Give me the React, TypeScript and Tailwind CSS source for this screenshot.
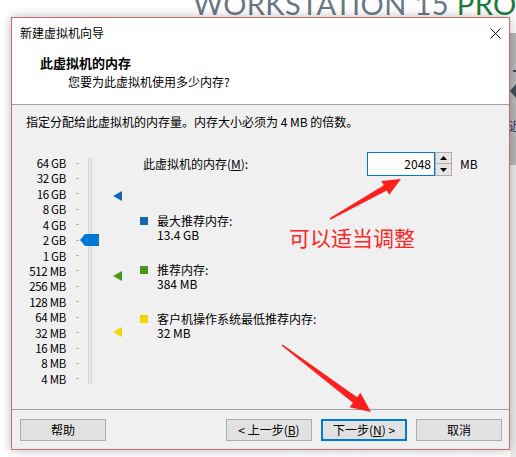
import React from "react";

const labels = [
  "64 GB",
  "32 GB",
  "16 GB",
  "8 GB",
  "4 GB",
  "2 GB",
  "1 GB",
  "512 MB",
  "256 MB",
  "128 MB",
  "64 MB",
  "32 MB",
  "16 MB",
  "8 MB",
  "4 MB",
];

function arrowPoints(
  tx: number,
  ty: number,
  px: number,
  py: number,
  w0: number,
  w1: number,
  w2: number,
  L: number
): string {
  const dx = px - tx;
  const dy = py - ty;
  const len = Math.hypot(dx, dy);
  const ux = dx / len;
  const uy = dy / len;
  const nx = -uy;
  const ny = ux;
  const bx = px - ux * L;
  const by = py - uy * L;
  const pts: [number, number][] = [
    [tx + nx * w0, ty + ny * w0],
    [bx + nx * w1, by + ny * w1],
    [bx + nx * w2, by + ny * w2],
    [px, py],
    [bx - nx * w2, by - ny * w2],
    [bx - nx * w1, by - ny * w1],
    [tx - nx * w0, ty - ny * w0],
  ];
  return pts.map((p) => `${p[0].toFixed(1)},${p[1].toFixed(1)}`).join(" ");
}

function Button({
  children,
  primary,
}: {
  children: React.ReactNode;
  primary?: boolean;
}) {
  return (
    <div
      className={
        primary
          ? "w-[86px] h-[22px] border-2 border-[#0078d7] bg-[#e1e1e1] flex items-center justify-center text-[12px] leading-[14px] text-black"
          : "w-[86px] h-[22px] border border-[#adadad] bg-[#e1e1e1] flex items-center justify-center text-[12px] leading-[14px] text-black"
      }
    >
      {children}
    </div>
  );
}

function LegendItem({
  color,
  title,
  value,
}: {
  color: string;
  title: string;
  value: string;
}) {
  return (
    <div className="flex items-start">
      <div className={`w-[8px] h-[8px] mt-[5px] ${color}`} />
      <div className="ml-[9px] flex flex-col text-[12px] text-black">
        <span className="h-[15px] leading-[17px]">{title}</span>
        <span className="h-[15px] leading-[15px]">{value}</span>
      </div>
    </div>
  );
}

export default function App() {
  return (
    <div className="relative w-[516px] h-[457px] overflow-hidden bg-white font-['Noto_Sans_CJK_SC',sans-serif]">
      {/* desktop background: VMware app behind */}
      <div className="absolute left-[193px] top-[-11px] whitespace-nowrap font-['Lato',sans-serif] text-[29px] leading-[29px] tracking-[0.4px] text-[#6b7885]">
        WORKSTATION 15 <span className="text-[#1d7a3c]">PRO</span>
        <span className="text-[#1d7a3c] text-[12px] align-top">™</span>
      </div>
      <div className="absolute left-[510px] top-[33px] w-[6px] h-[132px] bg-[#b9b9b9] overflow-hidden">
        <div className="absolute left-[3px] top-[37px] w-[4px] h-[2px] bg-[#3f4b56]" />
        <svg
          className="absolute left-0 top-[51px]"
          width="6"
          height="14"
          viewBox="0 0 6 14"
        >
          <polygon points="0,7 6,0 6,14" fill="#3f4b56" />
        </svg>
        <div className="absolute left-[-1px] top-[86px] text-[12px] leading-[14px] text-[#3a2a6a]">
          近
        </div>
      </div>
      <div className="absolute left-[510px] top-[165px] w-[6px] h-[292px] bg-[#ebebeb]" />

      {/* dialog window */}
      <div className="absolute left-[11px] top-[17px] w-[499px] h-[433px] border border-[#cf6b6b] bg-white flex flex-col shadow-[0_0_10px_rgba(0,0,0,0.28)]">
        {/* title bar */}
        <div className="h-[30px] flex items-center justify-between pl-[8px] shrink-0">
          <span className="text-[12px] leading-[16px] text-black">
            新建虚拟机向导
          </span>
          <div className="w-[28px] h-full flex items-center justify-center">
            <svg width="11" height="11" viewBox="0 0 11 11">
              <path d="M0.5 0.5 L10.5 10.5 M10.5 0.5 L0.5 10.5" stroke="#111" strokeWidth="1" />
            </svg>
          </div>
        </div>
        {/* header */}
        <div className="h-[56px] shrink-0 flex flex-col pt-[7px]">
          <span className="pl-[28px] text-[13px] leading-[16px] font-bold text-black">
            此虚拟机的内存
          </span>
          <span className="pl-[56px] mt-[3px] text-[12px] leading-[16px] text-black">
            您要为此虚拟机使用多少内存?
          </span>
        </div>
        <div className="h-px bg-[#a0a0a0] shrink-0" />
        {/* body */}
        <div className="h-[304px] shrink-0 bg-[#f0f0f0] flex flex-col pt-[9px]">
          <span className="pl-[14px] text-[12px] leading-[16px] text-black">
            指定分配给此虚拟机的内存量。内存大小必须为 4 MB 的倍数。
          </span>
          <div className="mt-[20px] flex">
            {/* slider */}
            <div className="relative w-[128px] h-[240px] shrink-0">
              <div className="mt-[6px] h-[230px] flex flex-col justify-between">
                {labels.map((l) => (
                  <div key={l} className="h-[14px] flex items-center">
                    <span className="w-[54px] text-right text-[11.5px] leading-[14px] tracking-[-0.3px] text-black whitespace-nowrap">
                      {l}
                    </span>
                    <div className="ml-[10px] w-[3px] h-px bg-[#b4b4b4]" />
                  </div>
                ))}
              </div>
              <div className="absolute left-[76px] top-[8px] w-[4px] h-[226px] rounded-[1px] border border-[#d6d6d6] bg-[#e7e7e7]" />
              <svg
                className="absolute left-[68px] top-[84px]"
                width="19"
                height="12"
                viewBox="0 0 19 12"
              >
                <polygon points="0,6 5,0 19,0 19,12 5,12" fill="#0078d7" />
              </svg>
              <svg
                className="absolute left-[101px] top-[41px]"
                width="9"
                height="10"
                viewBox="0 0 9 10"
              >
                <polygon points="0,5 9,0 9,10" fill="#1565b0" />
              </svg>
              <svg
                className="absolute left-[101px] top-[121px]"
                width="9"
                height="10"
                viewBox="0 0 9 10"
              >
                <polygon points="0,5 9,0 9,10" fill="#4a961a" />
              </svg>
              <svg
                className="absolute left-[101px] top-[177px]"
                width="9"
                height="10"
                viewBox="0 0 9 10"
              >
                <polygon points="0,5 9,0 9,10" fill="#f2d600" />
              </svg>
            </div>
            {/* right column */}
            <div className="flex flex-col">
              <div className="mt-[2px] h-[24px] flex items-center">
                <span className="w-[227px] pl-[3px] text-[12px] leading-[16px] text-black">
                  此虚拟机的内存(<span className="underline">M</span>):
                </span>
                <div className="w-[68px] h-full border border-[#0078d7] bg-white flex items-center justify-end pr-[3px] text-[12px] leading-[16px] text-black">
                  2048
                </div>
                <div className="w-[17px] h-full flex flex-col">
                  <div className="h-[12px] border border-[#adadad] bg-[#e5e5e5] flex items-center justify-center">
                    <svg width="7" height="4" viewBox="0 0 7 4">
                      <polygon points="3.5,0 7,4 0,4" fill="#000" />
                    </svg>
                  </div>
                  <div className="h-[12px] border border-t-0 border-[#adadad] bg-[#e5e5e5] flex items-center justify-center">
                    <svg width="7" height="4" viewBox="0 0 7 4">
                      <polygon points="0,0 7,0 3.5,4" fill="#000" />
                    </svg>
                  </div>
                </div>
                <span className="ml-[8px] text-[12px] leading-[16px] text-black">
                  MB
                </span>
              </div>
              <div className="mt-[36px] flex flex-col gap-[19px]">
                <LegendItem
                  color="bg-[#1565b0]"
                  title="最大推荐内存:"
                  value="13.4 GB"
                />
                <LegendItem
                  color="bg-[#4a961a]"
                  title="推荐内存:"
                  value="384 MB"
                />
                <LegendItem
                  color="bg-[#f2d600]"
                  title="客户机操作系统最低推荐内存:"
                  value="32 MB"
                />
              </div>
            </div>
          </div>
        </div>
        <div className="h-px bg-[#a0a0a0] shrink-0" />
        {/* footer */}
        <div className="flex-1 bg-[#f0f0f0] flex items-start pt-[9px] pl-[8px] pr-[7px]">
          <Button>帮助</Button>
          <div className="ml-auto flex gap-[9px]">
            <Button>
              &lt; 上一步(<span className="underline">B</span>)
            </Button>
            <Button primary>
              下一步(<span className="underline">N</span>) &gt;
            </Button>
            <Button>取消</Button>
          </div>
        </div>
      </div>

      {/* red annotation */}
      <div className="absolute left-[289px] top-[226px] text-[21px] leading-[22px] text-[#ff2424] whitespace-nowrap">
        可以适当调整
      </div>
      <svg
        className="absolute left-0 top-0 pointer-events-none"
        width="516"
        height="457"
        viewBox="0 0 516 457"
      >
        <polygon
          points={arrowPoints(330, 219, 401, 179, 0.8, 3, 8, 18)}
          fill="#ff1e1e"
        />
        <polygon
          points={arrowPoints(282, 345, 371, 412, 0.8, 3.5, 9, 20)}
          fill="#ff1e1e"
        />
      </svg>
    </div>
  );
}
